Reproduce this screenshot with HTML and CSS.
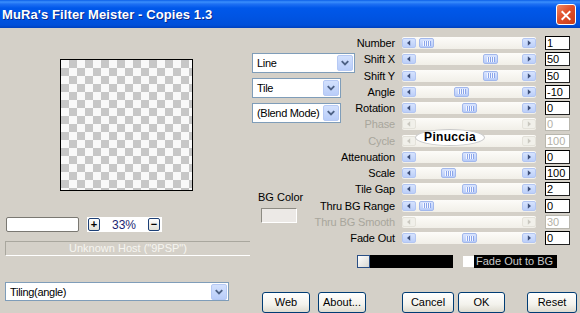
FILE: index.html
```html
<!DOCTYPE html>
<html lang="en">
<head>
  <meta charset="UTF-8">
  <title>MuRa's Filter Meister - Copies 1.3</title>
  <link rel="stylesheet" href="styles.css">
</head>
<body>
  <div class="dialog">
    <div class="titlebar">
      <span class="title">MuRa's Filter Meister - Copies 1.3</span>
      <span class="close">
        <svg viewBox="0 0 20 21" width="20" height="21"><path d="M6 6.5 L14 14.5 M14 6.5 L6 14.5" stroke="#fff" stroke-width="2.2" stroke-linecap="square"/></svg>
      </span>
    </div>

    <div class="content">
      <!-- preview + zoom + host -->
      <div class="leftcol">
        <div class="preview"></div>
        <div class="zoomrow">
          <span class="zoominput"></span>
          <span class="zoomctl">
            <span class="zbtn">+</span>
            <span class="zpct">33%</span>
            <span class="zbtn">&minus;</span>
          </span>
        </div>
        <div class="hostbar">Unknown Host ("9PSP")</div>
        <div class="combo tiling">
          <span class="combo-text">Tiling(angle)</span>
          <span class="combo-btn"><svg viewBox="0 0 15 15"><path d="M4 5.5 L7.5 9 L11 5.5"/></svg></span>
        </div>
      </div>

      <div class="rightcol">
        <div class="upper">
          <div class="midcol">
            <div class="combo line">
              <span class="combo-text">Line</span>
              <span class="combo-btn"><svg viewBox="0 0 15 15"><path d="M4 5.5 L7.5 9 L11 5.5"/></svg></span>
            </div>
            <div class="combo short">
              <span class="combo-text">Tile</span>
              <span class="combo-btn"><svg viewBox="0 0 15 15"><path d="M4 5.5 L7.5 9 L11 5.5"/></svg></span>
            </div>
            <div class="combo short">
              <span class="combo-text">(Blend Mode)</span>
              <span class="combo-btn"><svg viewBox="0 0 15 15"><path d="M4 5.5 L7.5 9 L11 5.5"/></svg></span>
            </div>
            <div class="bgcolor">
              <span class="bglabel">BG Color</span>
              <span class="swatch"></span>
            </div>
          </div>

          <div class="params" id="params"></div>

          <div class="stamp">Pinuccia</div>
        </div>

        <div class="faderow">
          <span class="colorwell"></span>
          <span class="blackbar"></span>
          <span class="checkbox"></span>
          <span class="fadelabel">Fade Out to BG</span>
        </div>

        <div class="buttons">
          <span class="btn web">Web</span>
          <span class="btn about">About...</span>
          <span class="btn cancel">Cancel</span>
          <span class="btn ok">OK</span>
          <span class="btn reset">Reset</span>
        </div>
      </div>
    </div>
  </div>

  <script>
    // label, thumb offset (px, -1 = disabled), value
    var rows = [
      ["Number", 3, "1"],
      ["Shift X", 67, "50"],
      ["Shift Y", 67, "50"],
      ["Angle", 38, "-10"],
      ["Rotation", 46, "0"],
      ["Phase", -1, "0"],
      ["Cycle", -1, "100"],
      ["Attenuation", 46, "0"],
      ["Scale", 25, "100"],
      ["Tile Gap", 46, "2"],
      ["Thru BG Range", 3, "0"],
      ["Thru BG Smooth", -1, "30"],
      ["Fade Out", 46, "0"]
    ];
    var left = '<svg viewBox="0 0 14 10"><path d="M8.5 1.5 L4.5 5 L8.5 8.5 Z"/></svg>';
    var right = '<svg viewBox="0 0 14 10"><path d="M5.5 1.5 L9.5 5 L5.5 8.5 Z"/></svg>';
    var html = "";
    for (var i = 0; i < rows.length; i++) {
      var r = rows[i];
      var off = r[1] < 0 ? " off" : "";
      html += '<span class="plabel' + off + '">' + r[0] + '</span>';
      html += '<span class="slider' + off + '"><span class="sarrow">' + left + '</span><span class="track">';
      if (r[1] >= 0) html += '<span class="thumb" style="margin-left:' + r[1] + 'px"></span>';
      html += '</span><span class="sarrow">' + right + '</span></span>';
      html += '<span class="pvalue' + off + '">' + r[2] + '</span>';
    }
    document.getElementById("params").innerHTML = html;
  </script>
</body>
</html>
```

FILE: styles.css
```css
*{
  margin: 0;
  padding: 0;
  box-sizing: border-box;
}
body{
  background: #d4d0c8;
  font-family: "Liberation Sans", Arial, sans-serif;
  font-size: 11px;
  color: #000;
  overflow: hidden;
  white-space: nowrap;
}
.dialog{
  width: 580px;
  height: 313px;
}

/* title bar */
.titlebar{
  height: 28px;
  display: flex;
  align-items: center;
  justify-content: space-between;
  padding: 0 4px 0 2px;
  background: linear-gradient(#0b5fe8 0, #3b8ffc 2px, #1e70f3 4px, #0058ea 8px, #0054e3 60%, #004fd9 90%, #0040bd 100%);
}
.title{
  color: #fff;
  font-weight: bold;
  font-size: 13px;
  text-shadow: 1px 1px 0 #0a2a8a;
  letter-spacing: 0.1px;
}
.close{
  width: 20px;
  height: 21px;
  border: 1px solid #fff;
  border-radius: 3px;
  background: linear-gradient(135deg, #f08a64, #e0502b 45%, #c93c17);
  display: flex;
}

.content{
  display: flex;
  height: 285px;
}

/* left column */
.leftcol{
  width: 250px;
  padding-top: 31px;
  display: flex;
  flex-direction: column;
}
.preview{
  width: 133px;
  height: 132px;
  margin-left: 60px;
  border: 1px solid #000;
  background: repeating-conic-gradient(#c7c7c7 0 25%, #f9f9f9 0 50%) 0 0/16px 16px;
}
.zoomrow{
  display: flex;
  align-items: center;
  margin-top: 26px;
  margin-left: 6px;
  height: 15px;
}
.zoominput{
  width: 73px;
  height: 15px;
  background: #fff;
  border: 1px solid #7a7872;
  border-radius: 2px;
}
.zoomctl{
  width: 75px;
  height: 15px;
  margin-left: 8px;
  background: #fff;
  display: flex;
  align-items: center;
  padding-left: 1px;
}
.zbtn{
  width: 12px;
  height: 13px;
  border: 1px solid #1c3f76;
  border-radius: 2px;
  background: linear-gradient(#fff, #e2e0d6);
  font-size: 11px;
  font-weight: bold;
  line-height: 11px;
  text-align: center;
}
.zpct{
  width: 48px;
  text-align: center;
  color: #1b1f72;
  font-size: 12px;
}
.hostbar{
  margin-top: 9px;
  margin-left: 5px;
  height: 15px;
  border-top: 1px solid #a9a79e;
  border-left: 1px solid #a9a79e;
  border-bottom: 1px solid #fff;
  color: #f6f5f0;
  font-size: 11px;
  line-height: 13px;
  text-align: center;
}

/* combo boxes */
.combo{
  height: 20px;
  background: #fff;
  border: 1px solid #7f9db9;
  display: flex;
  align-items: center;
  justify-content: space-between;
  padding: 1px;
}
.combo-text{
  padding-left: 3px;
  font-size: 11px;
  letter-spacing: -0.3px;
}
.combo-btn{
  width: 16px;
  height: 16px;
  border: 1px solid #b6c9f4;
  border-radius: 2px;
  background: linear-gradient(#d3e1fd, #b9cdf9);
  display: flex;
}
.combo-btn svg{
  width: 14px;
  height: 14px;
  fill: none;
  stroke: #4d6185;
  stroke-width: 2;
}
.tiling{
  width: 224px;
  height: 19px;
  margin-top: 26px;
  margin-left: 5px;
}

/* right side */
.rightcol{
  flex: 1;
  display: flex;
  flex-direction: column;
}
.upper{
  display: flex;
  position: relative;
}
.midcol{
  width: 67px;
  padding-top: 25px;
  padding-left: 2px;
}
.midcol .combo{
  margin-bottom: 5px;
}
.line{
  width: 103px;
}
.short{
  width: 89px;
}
.bgcolor{
  margin-top: 68px;
  padding-left: 6px;
  display: flex;
  flex-direction: column;
}
.bglabel{
  font-size: 11px;
  line-height: 13px;
}
.swatch{
  width: 36px;
  height: 15px;
  margin: 4px 0 0 3px;
  background: #ece9e6;
  border: 1px solid;
  border-color: #8d8b83 #fff #fff #8d8b83;
}

/* parameter grid */
.params{
  display: grid;
  grid-template-columns: 78px 134px 27px;
  grid-auto-rows: 16.25px;
  column-gap: 7px;
  align-items: center;
  padding-top: 7px;
}
.params .pvalue{
  margin-left: 2px;
}
.plabel{
  text-align: right;
  font-size: 11px;
  letter-spacing: -0.15px;
  justify-self: end;
}
.plabel.off{
  color: #a8a69c;
}
.slider{
  height: 12px;
  display: flex;
  align-items: center;
  border-radius: 2px;
  background: linear-gradient(#fdfcf9, #f1efe8);
}
.sarrow{
  width: 14px;
  height: 10px;
  border: 1px solid #b3c6f2;
  border-radius: 2px;
  background: linear-gradient(#d6e3fe, #bccff9);
  display: flex;
}
.sarrow svg{
  width: 12px;
  height: 8px;
  fill: #3d4f7a;
}
.slider.off .sarrow{
  border-color: #e4e2da;
  background: #f1f0ea;
}
.slider.off .sarrow svg{
  fill: #c9c7bf;
}
.track{
  flex: 1;
  height: 10px;
  display: flex;
}
.thumb{
  width: 15px;
  height: 10px;
  border: 1px solid #a2b8ec;
  border-radius: 2px;
  background: repeating-linear-gradient(90deg, #f4f7ff 0 1px, #8aa5ea 1px 2px) center/8px 5px no-repeat, linear-gradient(#d9e4fe, #b8ccf9);
}
.pvalue{
  height: 14px;
  background: #fff;
  border: 1px solid;
  border-color: #000 #222 #222 #000;
  font-size: 11px;
  line-height: 12px;
  padding-left: 1px;
}
.pvalue.off{
  border-color: #b9b7ae;
  color: #b3b1a7;
}

/* watermark over the disabled rows */
.stamp{
  position: absolute;
  left: 165px;
  top: 101px;
  width: 70px;
  height: 17px;
  border: 1px solid #c9c9c9;
  border-radius: 50%;
  background: #fff;
  font-weight: bold;
  font-size: 12px;
  line-height: 15px;
  text-align: center;
  letter-spacing: 0.3px;
}

/* fade out row */
.faderow{
  display: flex;
  align-items: center;
  margin-top: 9px;
  margin-left: 107px;
  height: 13px;
}
.colorwell{
  width: 13px;
  height: 13px;
  border: 1px solid #2a4f85;
  background: linear-gradient(135deg, #fff, #d9d8d2);
}
.blackbar{
  width: 83px;
  height: 13px;
  background: #000;
}
.checkbox{
  width: 11px;
  height: 11px;
  margin-left: 10px;
  background: #fff;
}
.fadelabel{
  width: 83px;
  height: 13px;
  background: #000;
  color: #c9c9c9;
  font-size: 11px;
  line-height: 13px;
  padding-left: 2px;
  overflow: hidden;
}

/* buttons */
.buttons{
  display: flex;
  margin-top: 24px;
}
.btn{
  height: 21px;
  border: 1px solid #003c74;
  border-radius: 3px;
  background: linear-gradient(#fff, #f3f2ec 60%, #dedbd0);
  font-size: 11px;
  line-height: 19px;
  text-align: center;
}
.web{
  width: 48px;
  margin-left: 12px;
}
.about{
  width: 48px;
  margin-left: 8px;
}
.cancel{
  width: 52px;
  margin-left: 36px;
}
.ok{
  width: 47px;
  margin-left: 4px;
}
.reset{
  width: 50px;
  margin-left: 22px;
}
```
